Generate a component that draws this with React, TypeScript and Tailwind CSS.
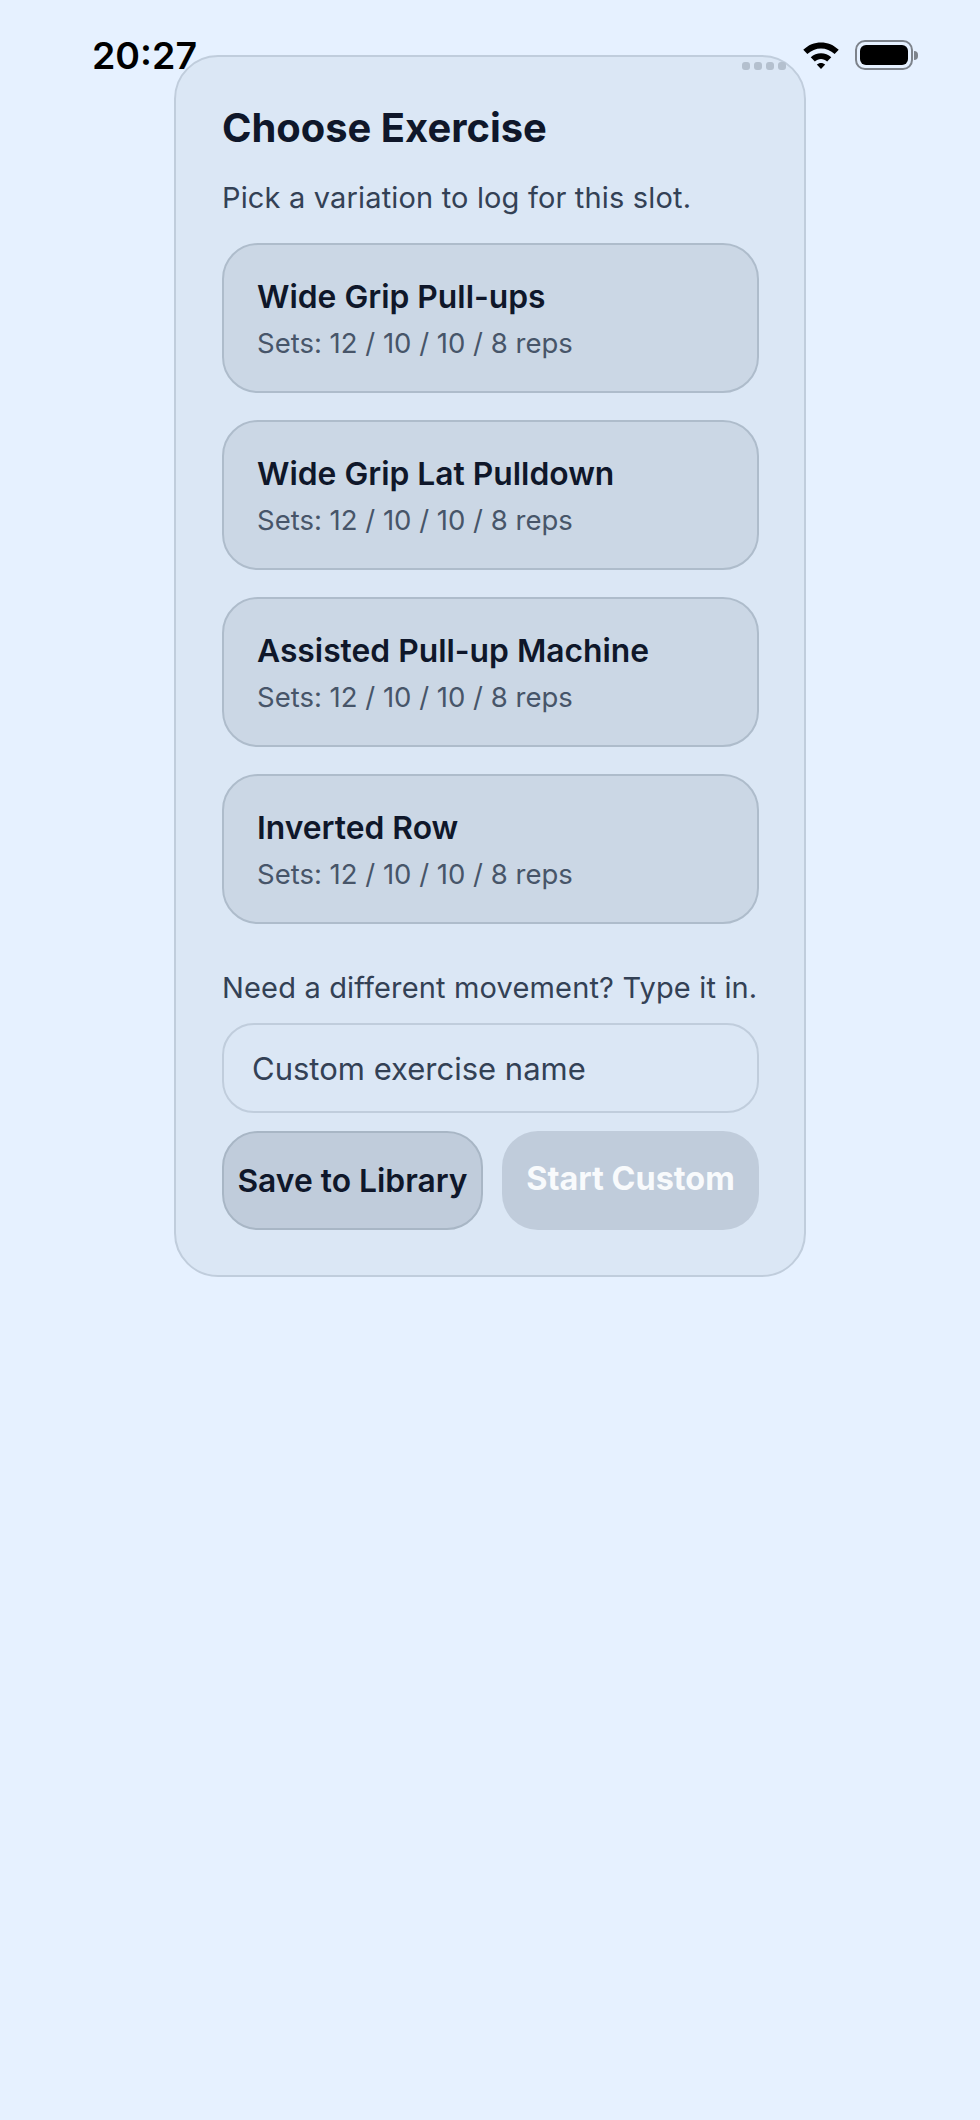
import { useState } from 'react';

const variations = [
  'Wide Grip Pull-ups',
  'Wide Grip Lat Pulldown',
  'Assisted Pull-up Machine',
  'Inverted Row',
];

function StatusBar() {
  return (
    <div className="absolute left-0 top-0 z-10 flex h-[110px] w-full items-start justify-between pl-[92px] pr-[62px] pt-[32px]">
      <span className="text-[37.5px] font-semibold leading-[48px] text-black">20:27</span>
      <div className="flex items-center gap-[15px] pt-[8px]">
        <svg width="38" height="28" viewBox="0 0 40 30" fill="none">
          <path d="M1 9.5C11.5 -1 28.5 -1 39 9.5L34.6 14C26.4 6 13.6 6 5.4 14Z" fill="#000" />
          <path d="M9 17.5C15 11.5 25 11.5 31 17.5L26.6 22C23 18.4 17 18.4 13.4 22Z" fill="#000" />
          <path d="M20 30L15.5 25.3C18 22.9 22 22.9 24.5 25.3Z" fill="#000" />
        </svg>
        <div className="flex items-center gap-[1px]">
          <div className="h-[30px] w-[58px] rounded-[10px] border-[2px] border-[#7d838b] p-[3px]">
            <div className="h-full w-full rounded-[6px] bg-black" />
          </div>
          <div className="h-[9px] w-[4px] rounded-r-full bg-[#7d838b]" />
        </div>
      </div>
    </div>
  );
}

export default function App() {
  const [customName, setCustomName] = useState('');

  return (
    <div className="relative min-h-[2120px] bg-[#e6f1ff] font-['Inter',sans-serif]">
      <StatusBar />
      <div className="flex justify-center pt-[55px]">
        <div className="relative w-[632px] rounded-[44px] border-[2px] border-[#c0cddc] bg-[#dbe7f5] pb-[45px] pl-[46px] pr-[45px] pt-[47px]">
          <div className="absolute right-[18px] top-[5px] flex gap-[4px]">
            <span className="h-[8px] w-[8px] rounded-[3px] bg-[#b4c0ce]" />
            <span className="h-[8px] w-[8px] rounded-[3px] bg-[#b4c0ce]" />
            <span className="h-[8px] w-[8px] rounded-[3px] bg-[#b4c0ce]" />
            <span className="h-[8px] w-[8px] rounded-[3px] bg-[#b4c0ce]" />
          </div>
          <h1 className="text-[39.9px] font-bold leading-[48px] text-[#0f172a]">Choose Exercise</h1>
          <p className="mt-[26px] whitespace-nowrap text-[29px] leading-[40px] tracking-[0.16px] text-[#334155]">Pick a variation to log for this slot.</p>
          <div className="mt-[25px] flex flex-col gap-[27px]">
            {variations.map((name) => (
              <button
                key={name}
                type="button"
                className="flex h-[150px] flex-col rounded-[36px] border-[2px] border-[#aebccb] bg-[#cbd7e5] px-[33px] pt-[32px] text-left"
              >
                <span className="text-[31.8px] font-semibold leading-[40px] text-[#0f172a]">{name}</span>
                <span className="mt-[8px] text-[27.5px] leading-[36px] text-[#475569]">Sets: 12 / 10 / 10 / 8 reps</span>
              </button>
            ))}
          </div>
          <p className="mt-[44px] whitespace-nowrap text-[29px] leading-[40px] tracking-[0.16px] text-[#334155]">Need a different movement? Type it in.</p>
          <input
            value={customName}
            onChange={(event) => setCustomName(event.target.value)}
            placeholder="Custom exercise name"
            className="mt-[15px] h-[90px] w-full rounded-[32px] border-[2px] border-[#c0cddc] bg-transparent px-[28px] text-[31px] text-[#334155] outline-none placeholder:text-[#334155]"
          />
          <div className="mt-[18px] flex gap-[19px]">
            <button
              type="button"
              className="h-[99px] w-[261px] rounded-[36px] border-[2px] border-[#a8b6c5] bg-[#c0ccdb] text-[31.8px] font-semibold text-[#0f172a]"
            >
              Save to Library
            </button>
            <button
              type="button"
              className="h-[99px] flex-1 rounded-[36px] bg-[#c0ccdb] pb-[3px] text-[32.4px] font-bold text-[#f8fafc]"
            >
              Start Custom
            </button>
          </div>
        </div>
      </div>
    </div>
  );
}
